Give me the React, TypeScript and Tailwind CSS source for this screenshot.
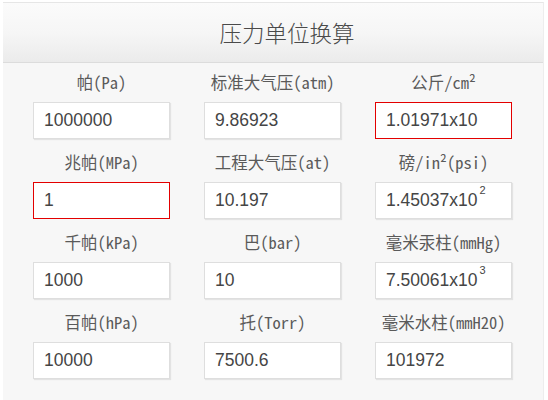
import React from "react";

type Cell = { label: string; value: React.ReactNode; red?: boolean };

const Sup = ({ n }: { n: string }) => (
  <span className="inline-block text-[11px] leading-none align-top relative top-[-2px] ml-[2px]">{n}</span>
);

const cells: Cell[] = [
  { label: "帕(Pa)", value: "1000000" },
  { label: "标准大气压(atm)", value: "9.86923" },
  { label: "公斤/cm²", value: "1.01971x10", red: true },
  { label: "兆帕(MPa)", value: "1", red: true },
  { label: "工程大气压(at)", value: "10.197" },
  { label: "磅/in²(psi)", value: (<>1.45037x10<Sup n="2" /></>) },
  { label: "千帕(kPa)", value: "1000" },
  { label: "巴(bar)", value: "10" },
  { label: "毫米汞柱(mmHg)", value: (<>7.50061x10<Sup n="3" /></>) },
  { label: "百帕(hPa)", value: "10000" },
  { label: "托(Torr)", value: "7500.6" },
  { label: "毫米水柱(mmH20)", value: "101972" },
];

export default function App() {
  return (
    <div className="w-[548px] h-[400px] bg-white overflow-hidden">
      <div className="ml-[3px] mt-[2px] w-[541px] h-[398px] border-t border-[#e6e6e6] border-r border-r-[#ededed] bg-[#f7f7f7]">
        <div className="h-[60px] border-b border-[#dcdcdc] bg-gradient-to-b from-[#fbfbfb] via-[#f6f6f6] to-[#ebebeb] flex items-center justify-center pl-[28px]">
          <span
            className="text-[22.5px] text-[#4a4a4a]"
            style={{ fontFamily: '"Noto Sans CJK SC", sans-serif', fontWeight: 300 }}
          >
            压力单位换算
          </span>
        </div>
        <div className="grid grid-cols-[137px_137px_137px] gap-x-[34px] pl-[30px]">
          {cells.map((c, i) => (
            <div key={i} className="flex flex-col">
              <div
                className="h-[39px] flex items-center justify-center text-[16.5px] text-[#5a5a5a]"
                style={{
                  fontFamily:
                    '"Noto Sans Mono CJK SC", "Noto Sans CJK SC", "Liberation Mono", monospace',
                  fontWeight: 300,
                }}
              >
                {c.label}
              </div>
              <div
                className={`h-[37px] bg-white flex items-center pl-[10px] text-[17.5px] text-[#454545] mb-[4px] ${
                  c.red
                    ? "border border-[#e30000]"
                    : "border border-[#dedede] shadow-[1px_1px_1px_rgba(0,0,0,0.08)]"
                }`}
                style={{ fontFamily: '"Liberation Sans", Arial, sans-serif' }}
              >
                <span>{c.value}</span>
              </div>
            </div>
          ))}
        </div>
      </div>
    </div>
  );
}
